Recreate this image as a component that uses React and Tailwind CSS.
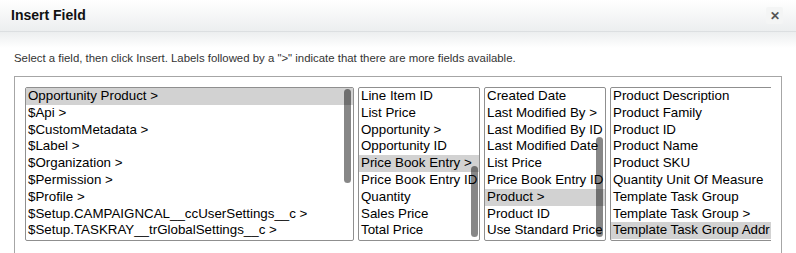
import React from "react";

const lists = [
  {
    w: "w-[329px]",
    items: [
      "Opportunity Product >",
      "$Api >",
      "$CustomMetadata >",
      "$Label >",
      "$Organization >",
      "$Permission >",
      "$Profile >",
      "$Setup.CAMPAIGNCAL__ccUserSettings__c >",
      "$Setup.TASKRAY__trGlobalSettings__c >",
    ],
    sel: 0,
    thumb: "right-[2px] top-[1px] h-[94px]",
  },
  {
    w: "w-[122px]",
    items: [
      "Line Item ID",
      "List Price",
      "Opportunity >",
      "Opportunity ID",
      "Price Book Entry >",
      "Price Book Entry ID",
      "Quantity",
      "Sales Price",
      "Total Price",
    ],
    sel: 4,
    thumb: "right-[1px] top-[78px] h-[71px]",
  },
  {
    w: "w-[122px]",
    items: [
      "Created Date",
      "Last Modified By >",
      "Last Modified By ID",
      "Last Modified Date",
      "List Price",
      "Price Book Entry ID",
      "Product >",
      "Product ID",
      "Use Standard Price",
    ],
    sel: 6,
    thumb: "right-[2px] top-[49px] h-[100px]",
  },
  {
    w: "w-[200px]",
    items: [
      "Product Description",
      "Product Family",
      "Product ID",
      "Product Name",
      "Product SKU",
      "Quantity Unit Of Measure",
      "Template Task Group",
      "Template Task Group >",
      "Template Task Group Addr",
    ],
    sel: 8,
    thumb: null,
  },
];

function ListBox({ w, items, sel, thumb }) {
  return (
    <div
      className={`${w} relative h-[154px] shrink-0 overflow-hidden rounded-[2px] border border-[#8f8f8f] bg-white`}
    >
      {items.map((t, i) => (
        <div
          key={i}
          className={`h-[16.8px] whitespace-nowrap pl-[2px] text-[13.33px] leading-[16px] text-black ${
            i === sel ? "bg-[#d2d2d2]" : ""
          }`}
        >
          {t}
        </div>
      ))}
      {thumb && (
        <div
          className={`absolute ${thumb} w-[7px] rounded-full bg-[rgba(0,0,0,0.47)]`}
        />
      )}
    </div>
  );
}

export default function App() {
  return (
    <div
      className="relative h-[253px] w-[796px] overflow-hidden bg-white"
      style={{ fontFamily: '"Liberation Sans", Arial, sans-serif' }}
    >
      <div className="flex h-[32px] items-center justify-between border-b border-[#dcdfe1] bg-[linear-gradient(#ffffff,#eceeef)] pl-[11px] pr-[13px]">
        <span className="text-[14px] font-bold text-[#111]">Insert Field</span>
        <div className="flex h-[17px] w-[17px] items-center justify-center rounded-[2px] bg-[#f4f5f5] text-[12px] font-bold leading-none text-[#555]">
          ✕
        </div>
      </div>
      <div className="bg-[linear-gradient(#eceeef,#ffffff_16px)] pt-[19px]">
        <p className="pl-[14px] text-[11.4px] leading-[15px] text-[#333]">
          Select a field, then click Insert. Labels followed by a "&gt;" indicate
          that there are more fields available.
        </p>
        <div className="ml-[14px] mt-[10px] w-[768px] border border-b-0 border-[#a6a6a6] p-[10px] pb-[20px]">
          <div className="flex gap-[4px] overflow-hidden">
            {lists.map((l, i) => (
              <ListBox key={i} {...l} />
            ))}
          </div>
        </div>
      </div>
    </div>
  );
}
